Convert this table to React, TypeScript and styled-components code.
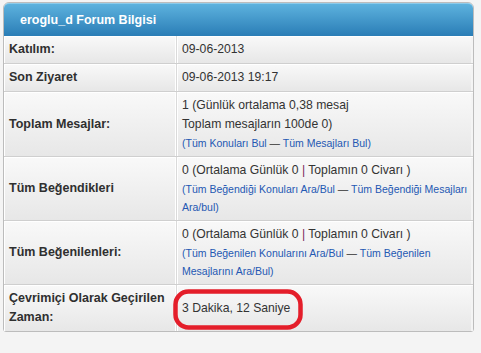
import React from "react";
import styled, { createGlobalStyle } from "styled-components";

const Global = createGlobalStyle`
  html, body { margin: 0; padding: 0; background: #f4f4f4; }
  body { font-family: "Liberation Sans", Arial, sans-serif; }
`;

const Page = styled.div`
  padding: 2px 0 0 3px;
  width: 481px;
  height: 353px;
  box-sizing: border-box;
`;

const Panel = styled.div`
  position: relative;
  width: 471px;
  box-sizing: border-box;
  border: 1px solid #bcbcbc;
  border-radius: 6px 6px 3px 3px;
  background: #fafafa;
`;

const Header = styled.div`
  height: 33px;
  border-radius: 5px 5px 0 0;
  background: linear-gradient(#5db2de, #2a7db6);
  border-top: 1px solid #8ccbea;
  box-sizing: border-box;
  display: flex;
  align-items: center;
  padding-left: 16px;
  color: #fff;
  font-weight: bold;
  font-size: 12.5px;
`;

const Rows = styled.div`
  display: flex;
  flex-direction: column;
`;

const Row = styled.div`
  display: grid;
  grid-template-columns: 172px 1fr;
  border-top: 1px solid #cfcfcf;
  &:first-of-type { border-top: none; }
`;

const Label = styled.div`
  padding: 4px 5px;
  display: flex;
  align-items: center;
  font-weight: bold;
  font-size: 12.5px;
  line-height: 19px;
  color: #2f2f2f;
  border-right: 1px solid #fff;
  background: linear-gradient(#f9f9f9, #e7e7e7);
  box-shadow: inset 1px 1px 0 #fff;
`;

const Value = styled.div`
  padding: 4px 5px;
  display: flex;
  flex-direction: column;
  justify-content: center;
  font-size: 12.2px;
  line-height: 19px;
  color: #333;
  border-left: 1px solid #dadada;
  background: linear-gradient(#f9f9f9, #e7e7e7);
  box-shadow: inset 1px 1px 0 #fff, inset -2px 0 0 #f4f4f4;
  white-space: nowrap;
`;

const Line = styled.div``;

const Links = styled.div`
  font-size: 10.5px;
  line-height: 18px;
  color: #333;
`;

const A = styled.a`
  color: #2458b3;
  text-decoration: none;
`;

const Pipe = styled.span`
  color: #7b1e5e;
`;

const Circled = styled.div`
  position: relative;
`;

const Ring = styled.svg`
  position: absolute;
  left: -9px;
  top: -10px;
  overflow: visible;
`;

export default function App() {
  return (
    <>
      <Global />
      <Page>
        <Panel>
          <Header>eroglu_d Forum Bilgisi</Header>
          <Rows>
            <Row>
              <Label>Katılım:</Label>
              <Value>09-06-2013</Value>
            </Row>
            <Row>
              <Label>Son Ziyaret</Label>
              <Value>09-06-2013 19:17</Value>
            </Row>
            <Row>
              <Label>Toplam Mesajlar:</Label>
              <Value>
                <Line>1 (Günlük ortalama 0,38 mesaj</Line>
                <Line>Toplam mesajların 100de 0)</Line>
                <Links>
                  <A href="#">(Tüm Konuları Bul</A> — <A href="#">Tüm Mesajları Bul)</A>
                </Links>
              </Value>
            </Row>
            <Row>
              <Label>Tüm Beğendikleri</Label>
              <Value>
                <Line>
                  0 (Ortalama Günlük 0 <Pipe>|</Pipe> Toplamın 0 Civarı )
                </Line>
                <Links>
                  <A href="#">(Tüm Beğendiği Konuları Ara/Bul</A> — <A href="#">Tüm Beğendiği Mesajları</A>
                  <br />
                  <A href="#">Ara/bul)</A>
                </Links>
              </Value>
            </Row>
            <Row>
              <Label>Tüm Beğenilenleri:</Label>
              <Value>
                <Line>
                  0 (Ortalama Günlük 0 <Pipe>|</Pipe> Toplamın 0 Civarı )
                </Line>
                <Links>
                  <A href="#">(Tüm Beğenilen Konularını Ara/Bul</A> — <A href="#">Tüm Beğenilen</A>
                  <br />
                  <A href="#">Mesajlarını Ara/Bul)</A>
                </Links>
              </Value>
            </Row>
            <Row>
              <Label>
                Çevrimiçi Olarak Geçirilen
                <br />
                Zaman:
              </Label>
              <Value>
                <Circled>
                  3 Dakika, 12 Saniye
                  <Ring width="130" height="41" viewBox="0 0 130 41">
                    <rect x="2.5" y="2.5" width="125" height="36" rx="13" ry="13" fill="none" stroke="#e41e2a" strokeWidth="4.5" />
                  </Ring>
                </Circled>
              </Value>
            </Row>
          </Rows>
        </Panel>
      </Page>
    </>
  );
}
